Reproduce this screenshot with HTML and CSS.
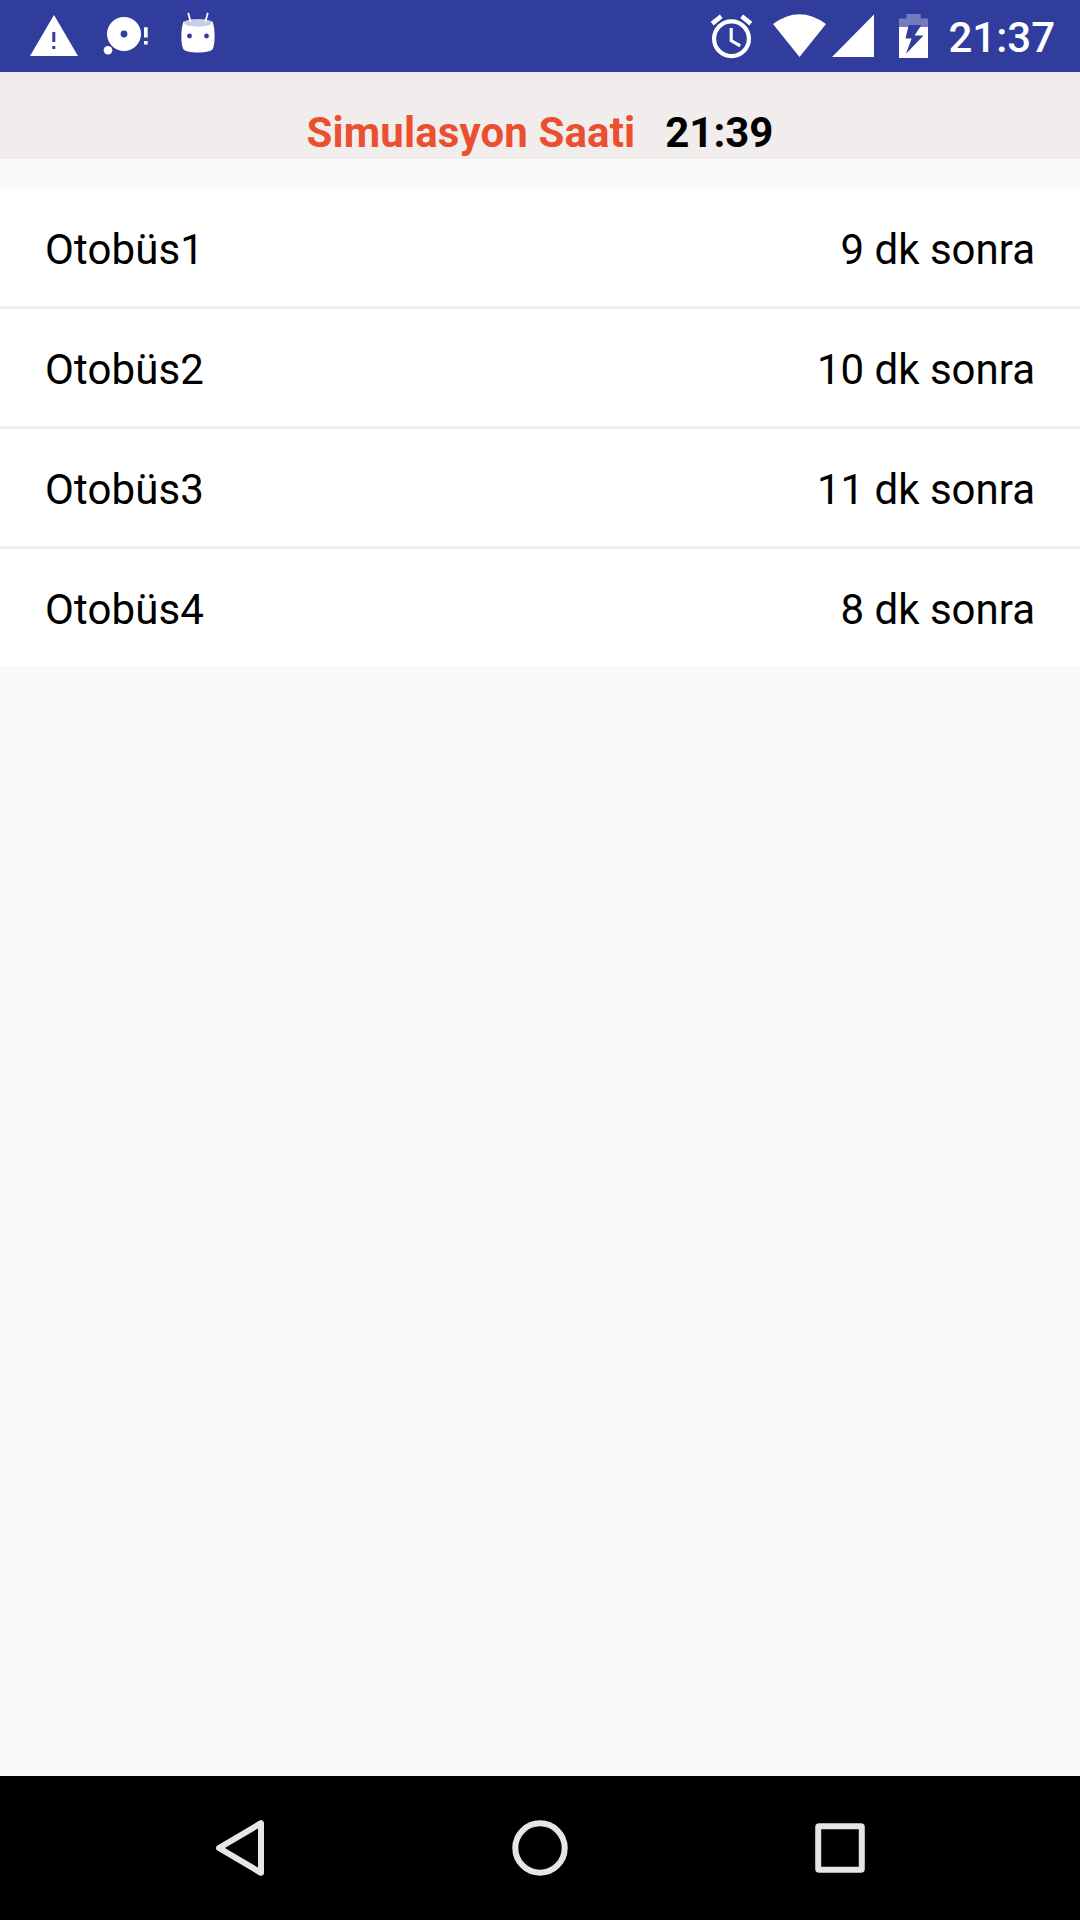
FILE: index.html
```html
<!DOCTYPE html>
<html lang="tr">
<head>
<meta charset="utf-8">
<title>Simulasyon Saati</title>
<link rel="stylesheet" href="styles.css">
</head>
<body>
<div class="screen">
  <div class="status-bar">
    <div class="notifications">
      <svg width="48" height="72" viewBox="0 0 48 72"><path fill="#fff" fill-rule="evenodd" d="M24 15L48 56H0zM22.3 32V42H25.3V32zM22.3 46V49H25.3V46z"/></svg>
      <svg width="46" height="72" viewBox="0 0 46 72" fill="#fff"><path fill-rule="evenodd" d="M21 17a17 17 0 1 0 0 34a17 17 0 1 0 0-34zM21 30.6a3.4 3.4 0 1 1 0 6.8a3.4 3.4 0 1 1 0-6.8z"/><circle cx="5" cy="50.3" r="4.3"/><path d="M41 27.3h3.7v10.2H41zM41 41h3.7v3.6H41z"/></svg>
      <svg width="36" height="72" viewBox="0 0 36 72"><path fill="#fff" d="M3.5 21.5C1 28 .5 42 3 48.500C4.500 53.800 31.500 53.800 33 48.500C35.500 42 35 28 32.500 21.500z"/><ellipse cx="18" cy="22.800" rx="13.800" ry="3.900" fill="#cbcde6"/><path d="M8.300 13.500L10.500 21M27.700 13.500L25.500 21" stroke="#fff" stroke-width="1.800" stroke-linecap="round"/><circle cx="9.500" cy="36" r="2.400" fill="#303d9d"/><circle cx="26.500" cy="36" r="2.400" fill="#303d9d"/></svg>
    </div>
    <div class="system">
      <svg class="alarm" width="43" height="72" viewBox="0 0 43 72" fill="none" stroke="#fff"><circle cx="21.500" cy="38.700" r="17.400" stroke-width="4.200"/><path stroke-width="3.100" d="M21.200 28V40.500L30.200 45.800"/><path stroke-width="4.600" d="M2.200 23.600L11.300 16.300M40.800 23.600L31.700 16.300"/></svg>
      <svg class="wifi" width="53" height="72" viewBox="0 0 53 72"><path fill="#fff" d="M0 24Q26.500 4.500 53 24L26.500 57z"/></svg>
      <svg class="signal" width="42" height="72" viewBox="0 0 42 72"><path fill="#fff" d="M42 14.500V57H0z"/></svg>
      <svg class="battery" width="29" height="72" viewBox="0 0 29 72"><path fill="#757cbc" d="M7.300 14H21.700V18.500H29V27H0V18.500H7.300z"/><path fill="#fff" d="M0 27H29V58H0z"/><path fill="#303d9d" d="M9.700 25H22.300L15.600 35.500H24.500L7 53.700L12.600 38.500H6.500z"/></svg>
      <span class="clock">21:37</span>
    </div>
  </div>
  <header class="sim-header">
    <span class="sim-label">Simulasyon Saati</span>
    <span class="sim-time">21:39</span>
  </header>
  <main class="bus-list">
    <div class="bus"><span class="bus-name">Otobüs1</span><span>9 dk sonra</span></div>
    <div class="bus"><span class="bus-name">Otobüs2</span><span>10 dk sonra</span></div>
    <div class="bus"><span class="bus-name">Otobüs3</span><span>11 dk sonra</span></div>
    <div class="bus"><span class="bus-name">Otobüs4</span><span>8 dk sonra</span></div>
  </main>
  <nav class="nav-bar">
    <svg width="60" height="60" viewBox="0 0 60 60"><path d="M51 5.200V54.800L9 30z"/></svg>
    <svg width="60" height="60" viewBox="0 0 60 60"><circle cx="30" cy="30" r="24.700"/></svg>
    <svg width="60" height="60" viewBox="0 0 60 60"><rect x="8.200" y="8.200" width="43.600" height="43.600" rx="1"/></svg>
  </nav>
</div>
</body>
</html>
```
FILE: styles.css
```css
body {
  margin: 0;
  font-family: Roboto, sans-serif;
  font-size: 42px;
  line-height: 49px;
  color: #000;
}

.screen {
  display: flex;
  flex-direction: column;
  height: 1920px;
  background: #fafafa;
}

.screen svg {
  display: block;
  flex: none;
}

.status-bar {
  display: flex;
  justify-content: space-between;
  height: 72px;
  padding: 0 25px 0 30px;
  background: #303d9d;
  color: #fff;
}

.notifications {
  display: flex;
}

.notifications svg:nth-child(2) {
  margin: 0 31px 0 25px;
}

.system {
  display: flex;
}

.wifi {
  margin: 0 6px 0 20px;
}

.battery {
  margin: 0 20px 0 25px;
}

.clock {
  padding-top: 13px;
  font-weight: 500;
}

.sim-header {
  display: flex;
  justify-content: center;
  gap: 30px;
  height: 51px;
  padding-top: 36px;
  background: #f1edec;
  font-weight: 700;
}

.sim-label {
  color: #ea5030;
  letter-spacing: 0.12px;
}

.bus-list {
  display: flex;
  flex-direction: column;
  gap: 3px;
  margin-top: 30px;
  background: #f0ecec;
}

.bus {
  display: flex;
  justify-content: space-between;
  height: 81px;
  padding: 36px 45px 0;
  background: #fff;
}

.bus-name {
  letter-spacing: 0.12px;
}

.nav-bar {
  display: grid;
  grid-template-columns: repeat(3, 300px);
  place-content: center;
  justify-items: center;
  height: 144px;
  margin-top: auto;
  background: #000;
}

.nav-bar svg {
  fill: none;
  stroke: #e6e6e6;
  stroke-width: 6;
  stroke-linejoin: round;
}
```
